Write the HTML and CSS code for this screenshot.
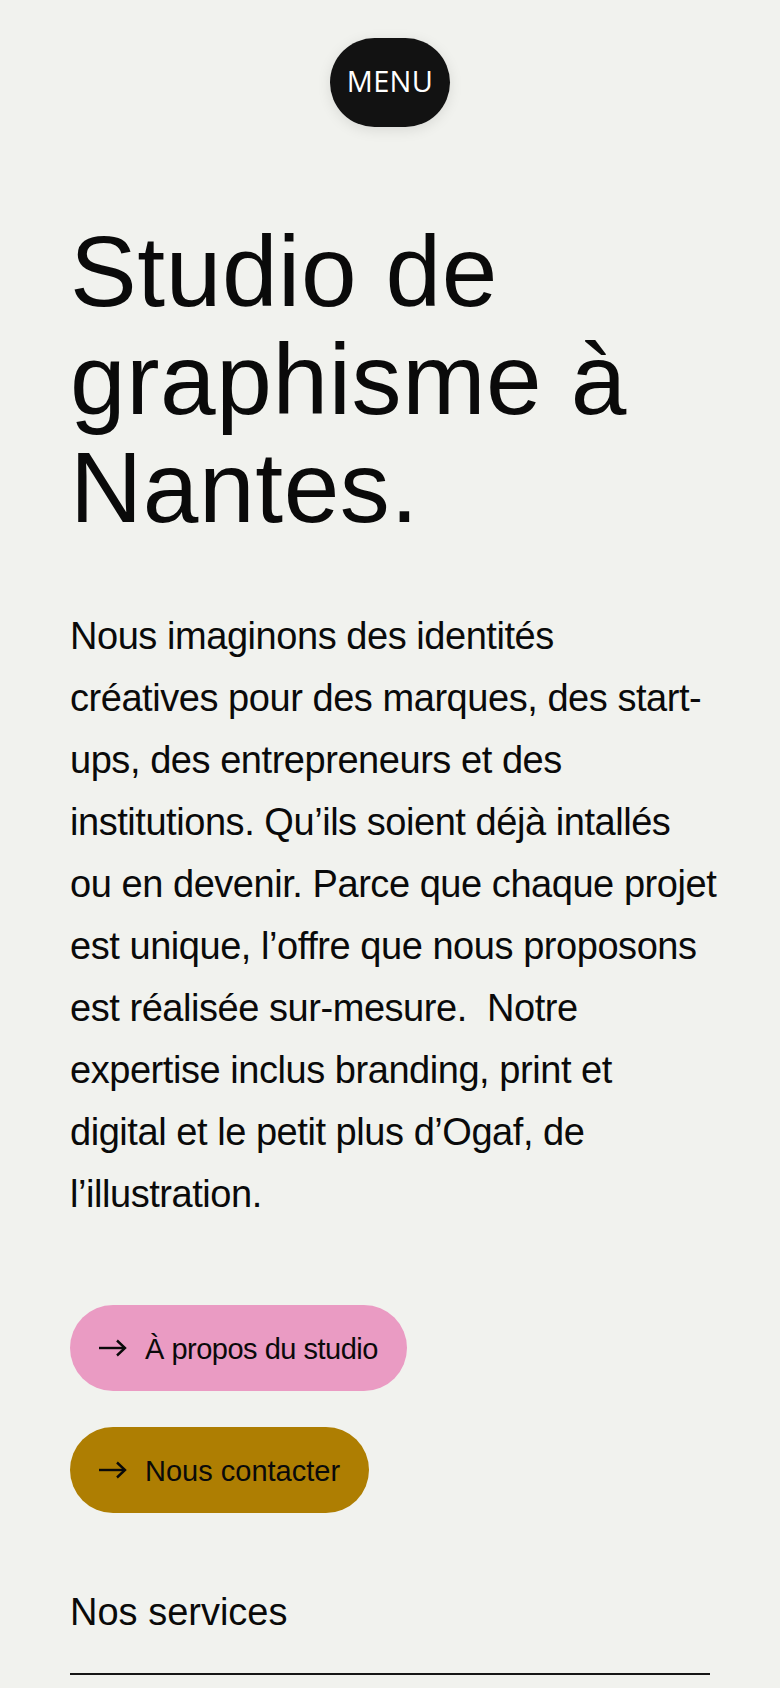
FILE: index.html
```html
<!DOCTYPE html>
<html lang="fr">
<head>
<meta charset="utf-8">
<title>Studio de graphisme à Nantes</title>
<link rel="stylesheet" href="styles.css">
</head>
<body>
<header class="topbar">
  <button class="menu-btn">MENU</button>
</header>
<main class="content">
  <h1 class="title">Studio de graphisme à Nantes.</h1>
  <p class="intro">Nous imaginons des identités<br>créatives pour des marques, des start-<br>ups, des entrepreneurs et des<br>institutions. Qu’ils soient déjà intallés<br>ou en devenir. Parce que chaque projet<br>est unique, l’offre que nous proposons<br>est réalisée sur-mesure.&nbsp; Notre<br>expertise inclus branding, print et<br>digital et le petit plus d’Ogaf, de<br>l’illustration.</p>
  <div class="actions">
    <a class="pill pill-pink" href="#">
      <svg class="arrow" width="28" height="18" viewBox="0 0 28 18" fill="none" stroke="#0a0a0a" stroke-width="2.4" stroke-linecap="butt" stroke-linejoin="miter"><path d="M0 9H26"/><path d="M18 1.5L26 9L18 16.5"/></svg>
      <span>À propos du studio</span>
    </a>
    <a class="pill pill-gold" href="#">
      <svg class="arrow" width="28" height="18" viewBox="0 0 28 18" fill="none" stroke="#0a0a0a" stroke-width="2.4" stroke-linecap="butt" stroke-linejoin="miter"><path d="M0 9H26"/><path d="M18 1.5L26 9L18 16.5"/></svg>
      <span>Nous contacter</span>
    </a>
  </div>
  <section class="services">
    <h2 class="services-title">Nos services</h2>
    <div class="rule"></div>
  </section>
</main>
</body>
</html>
```
FILE: styles.css
```css
* { box-sizing: border-box; }
html, body { margin: 0; padding: 0; }
body {
  background: #f1f2ee;
  color: #0a0a0a;
  font-family: "Liberation Sans", Arial, sans-serif;
  width: 780px;
  height: 1688px;
  overflow: hidden;
}
.topbar {
  display: flex;
  justify-content: center;
  padding-top: 38px;
}
.menu-btn {
  width: 120px;
  height: 89px;
  border: none;
  border-radius: 46px;
  background: #121212;
  color: #ffffff;
  font-family: "Open Sans", "Noto Sans", sans-serif;
  font-size: 29px;
  letter-spacing: 0.3px;
  padding: 0 0 5px;
  box-shadow: 0 3px 14px rgba(0,0,0,0.10);
}
.content {
  padding: 0 70px;
}
.title {
  margin: 90px 0 0;
  font-size: 100px;
  line-height: 108px;
  font-weight: 400;
  letter-spacing: 0.6px;
  width: 620px;
}
.intro {
  margin: 64px 0 0;
  font-size: 38px;
  line-height: 62px;
  letter-spacing: -0.45px;
  white-space: nowrap;
}
.actions {
  margin-top: 80px;
  display: flex;
  flex-direction: column;
  align-items: flex-start;
  gap: 36px;
}
.pill {
  display: inline-flex;
  align-items: center;
  gap: 18px;
  height: 86px;
  padding: 0 29px;
  border-radius: 43px;
  color: #0a0a0a;
  text-decoration: none;
  font-size: 29px;
  letter-spacing: -0.5px;
}
.pill span { position: relative; top: 1px; }
.arrow { flex: none; display: block; }
.pill-pink { background: #ea9bc3; }
.pill-gold { background: #ae7e02; letter-spacing: 0; }
.services {
  margin-top: 76px;
}
.services-title {
  margin: 0;
  font-size: 38px;
  line-height: 46px;
  font-weight: 400;
  letter-spacing: 0;
}
.rule {
  margin-top: 38px;
  height: 2px;
  background: #161616;
}
```
